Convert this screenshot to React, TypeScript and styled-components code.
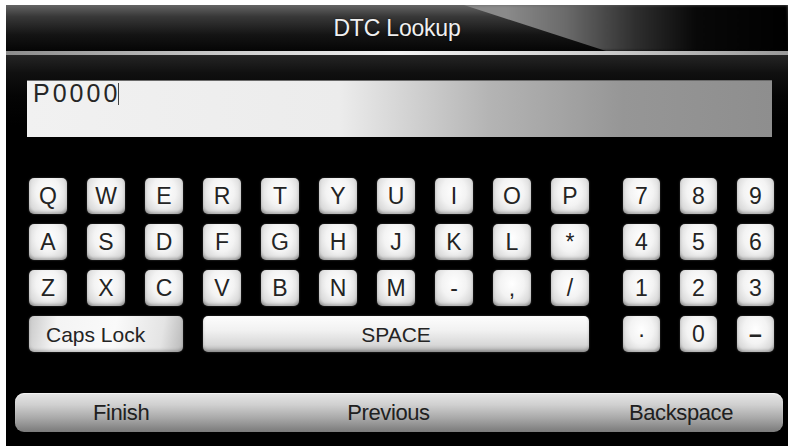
import styled, { createGlobalStyle } from "styled-components";

const GlobalStyle = createGlobalStyle`
  html, body {
    margin: 0;
    padding: 0;
    background: #ffffff;
    font-family: "Liberation Sans", Arial, sans-serif;
  }
`;

const Screen = styled.div`
  margin: 5px 2px 0 6px;
  height: 441px;
  background: #000;
  display: flex;
  flex-direction: column;
  overflow: hidden;
`;

const Header = styled.div`
  position: relative;
  height: 46px;
  display: flex;
  align-items: center;
  justify-content: center;
  background: linear-gradient(180deg, #646464 0%, #383838 25%, #141414 65%, #050505 100%);
  overflow: hidden;

  &::before {
    content: "";
    position: absolute;
    inset: 0;
    clip-path: polygon(458px 0, 100% 0, 100% 100%, 600px 100%);
    background: linear-gradient(90deg, #7e7e7e 0px, #8a8a8a 500px, #6a6a6a 560px, #2e2e2e 630px, #080808 690px, #000 100%);
    filter: blur(1.5px);
  }
`;

const Title = styled.h1`
  position: relative;
  margin: 0;
  font-size: 23px;
  font-weight: normal;
  color: #f0f0f0;
  text-shadow: 0 0 2px rgba(0, 0, 0, 0.6);
  letter-spacing: -0.2px;
`;

const Divider = styled.div`
  height: 4px;
  background: linear-gradient(90deg, #8c8c8c 0%, #cfcfcf 30%, #f2f2f2 50%, #cfcfcf 75%, #9a9a9a 100%);
`;

const Body = styled.div`
  flex: 1;
  display: flex;
  flex-direction: column;
  padding-top: 25px;
  background: linear-gradient(180deg, #252525 0px, #101010 18px, #050505 40px, #000 70px);
`;

const InputBox = styled.div`
  height: 57px;
  margin: 0 16px 0 21px;
  padding: 0 6px;
  box-sizing: border-box;
  display: flex;
  align-items: flex-start;
  background: linear-gradient(90deg, #f1f1f1 0%, #ececec 42%, #b4b4b4 62%, #969696 80%, #8e8e8e 100%);
  border-top: 1px solid #6a6a6a;
`;

const InputText = styled.span`
  font-size: 25px;
  letter-spacing: 3px;
  color: #262626;
  line-height: 1;
`;

const Caret = styled.span`
  display: inline-block;
  width: 1px;
  height: 22px;
  margin-top: 2px;
  margin-left: -2px;
  background: #444;
`;

const Keyboard = styled.div`
  margin-top: 41px;
  padding-left: 23px;
  display: flex;
  gap: 34px;
`;

const LetterGrid = styled.div`
  display: grid;
  grid-template-columns: repeat(10, 38px);
  grid-auto-rows: 36px;
  gap: 10px 20px;
`;

const NumberGrid = styled.div`
  display: grid;
  grid-template-columns: repeat(3, 37px);
  grid-auto-rows: 36px;
  gap: 10px 20px;
`;

const Key = styled.div<{ $span?: number; $wide?: boolean }>`
  grid-column: span ${(p) => p.$span ?? 1};
  display: flex;
  align-items: center;
  justify-content: center;
  border-radius: 5px;
  background: radial-gradient(ellipse at 50% 38%, #ffffff 0%, #f3f3f3 45%, #d9d9d9 78%, #a9a9a9 100%);
  box-shadow: inset 0 -2px 3px rgba(0, 0, 0, 0.22), 0 0 2px rgba(255, 255, 255, 0.25);
  color: #242424;
  font-size: ${(p) => (p.$wide ? "21px" : "23px")};
  line-height: 1;
  user-select: none;
`;

const CapsKey = styled(Key)`
  justify-content: flex-start;
  padding-left: 17px;
  background: linear-gradient(100deg, #c9c9c9 0%, #f4f4f4 18%, #fafafa 55%, #e4e4e4 85%, #b9b9b9 100%);
`;

const SpaceKey = styled(Key)`
  background: linear-gradient(180deg, #fdfdfd 0%, #f1f1f1 40%, #d8d8d8 80%, #b0b0b0 100%);
`;

const DashKey = styled(Key)`
  font-weight: bold;
`;

const BottomBar = styled.div`
  margin: 41px 5px 0 9px;
  height: 39px;
  border-radius: 9px;
  display: flex;
  align-items: center;
  padding: 0 50px 0 78px;
  background: linear-gradient(180deg, #e6e6e6 0%, #d0d0d0 30%, #a8a8a8 65%, #7a7a7a 100%);
  box-shadow: inset 0 1px 1px rgba(255, 255, 255, 0.6);
`;

const BarLabel = styled.span<{ $gap?: string }>`
  margin-left: ${(p) => p.$gap ?? "0"};
  font-size: 22px;
  color: #202020;
  letter-spacing: -0.4px;
`;

const rows = [
  ["Q", "W", "E", "R", "T", "Y", "U", "I", "O", "P"],
  ["A", "S", "D", "F", "G", "H", "J", "K", "L", "*"],
  ["Z", "X", "C", "V", "B", "N", "M", "-", ",", "/"],
];

const numbers = ["7", "8", "9", "4", "5", "6", "1", "2", "3", "·", "0"];

export default function App() {
  return (
    <>
      <GlobalStyle />
      <Screen>
        <Header>
          <Title>DTC Lookup</Title>
        </Header>
        <Divider />
        <Body>
          <InputBox>
            <InputText>P0000</InputText>
            <Caret />
          </InputBox>
          <Keyboard>
            <LetterGrid>
              {rows.flat().map((k, i) => (
                <Key key={i}>{k}</Key>
              ))}
              <CapsKey $span={3} $wide>
                Caps Lock
              </CapsKey>
              <SpaceKey $span={7} $wide>
                SPACE
              </SpaceKey>
            </LetterGrid>
            <NumberGrid>
              {numbers.map((n, i) => (
                <Key key={i}>{n}</Key>
              ))}
              <DashKey>–</DashKey>
            </NumberGrid>
          </Keyboard>
          <BottomBar>
            <BarLabel>Finish</BarLabel>
            <BarLabel $gap="198px">Previous</BarLabel>
            <BarLabel $gap="auto">Backspace</BarLabel>
          </BottomBar>
        </Body>
      </Screen>
    </>
  );
}
